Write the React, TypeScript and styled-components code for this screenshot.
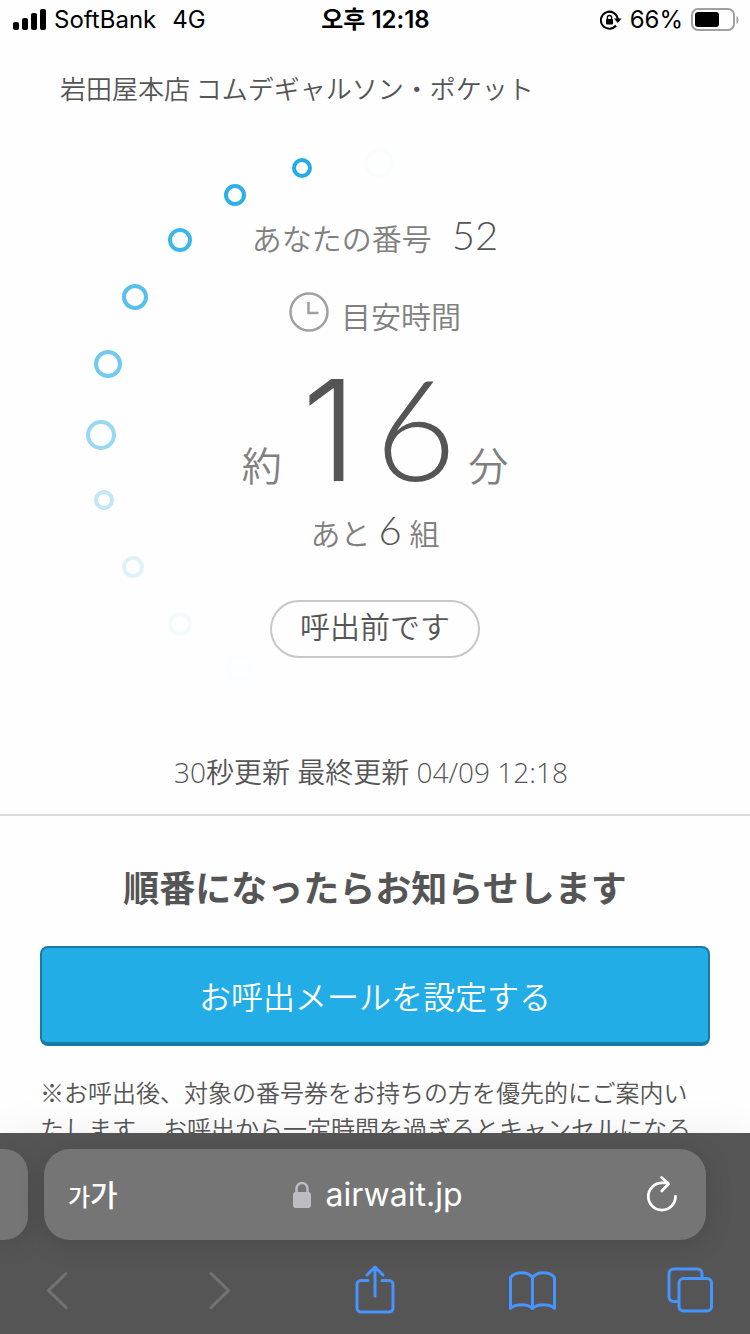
import React from "react";
import styled, { createGlobalStyle } from "styled-components";

const jp = `"Noto Sans CJK JP", sans-serif`;
const latin = `Inter, "Noto Sans CJK KR", sans-serif`;

const GlobalStyle = createGlobalStyle`
  *, *::before, *::after { box-sizing: border-box; }
  body { margin: 0; background: #fefefe; }
  h1, h2, p { margin: 0; }
  button { border: 0; padding: 0; background: none; color: inherit; font: inherit; cursor: pointer; }
`;

const Screen = styled.div`
  display: flex;
  flex-direction: column;
  height: 100vh;
  overflow: hidden;
  color: #555;
  font-family: ${jp};
  font-weight: 350;
`;

const StatusBar = styled.header`
  display: grid;
  grid-template-columns: 1fr auto 1fr;
  align-items: center;
  flex: none;
  height: 40px;
  padding: 0 11px 0 12px;
  color: #000;
  font: 400 24px/32px ${latin};
`;

const StatusGroup = styled.div<{ $end?: boolean }>`
  display: flex;
  align-items: center;
  justify-content: ${(p) => (p.$end ? "flex-end" : "flex-start")};
  gap: 8px;
`;

const Network = styled.span`
  margin-left: 8px;
`;

const Clock = styled.time`
  font-weight: 600;
`;

const Page = styled.main`
  flex: 1;
  min-height: 0;
  overflow: hidden;
`;

const ShopName = styled.h1`
  padding: 28px 60px 0;
  font-size: 26px;
  font-weight: inherit;
  line-height: 40px;
`;

const WaitStatus = styled.section`
  position: relative;
  display: flex;
  flex-direction: column;
  align-items: center;
  padding: 105px 0 22px;
  border-bottom: 2px solid #dcdcdc;
`;

const Dots = styled.svg`
  position: absolute;
  top: 0;
  left: calc(50% - 295px);
`;

const Row = styled.p<{ $gap: number; $top?: number }>`
  display: flex;
  align-items: baseline;
  gap: ${(p) => p.$gap}px;
  margin-top: ${(p) => p.$top ?? 0}px;
  color: #808080;
  font-size: 30px;
  line-height: 48px;
`;

const ClockIcon = styled.svg`
  align-self: flex-start;
`;

const Unit = styled.span`
  font-size: 40px;
`;

const Num = styled.span`
  color: #555;
  font-family: Lato, sans-serif;
  font-size: 40px;
  font-weight: 300;
  line-height: 40px;
`;

const Minutes = styled(Num)`
  padding-left: 8px;
  font-size: 140px;
  line-height: 120px;
`;

const Tens = styled.span`
  margin-right: 18px;
  font-family: Inter, sans-serif;
`;

const StatePill = styled.p`
  margin-top: 44px;
  padding: 0 28px 8px;
  border: 2px solid #c8c8c8;
  border-radius: 29px;
  font-size: 30px;
  line-height: 46px;
`;

const Updated = styled.p`
  margin-top: 94px;
  padding-right: 8px;
  font-family: "Open Sans", ${jp};
  font-size: 28px;
  line-height: 40px;
`;

const Notify = styled.section`
  padding: 44px 40px 0;
`;

const NotifyTitle = styled.h2`
  font-size: 36px;
  font-weight: 700;
  line-height: 52px;
  text-align: center;
`;

const MailButton = styled.button`
  display: block;
  width: 100%;
  height: 100px;
  margin: 34px 0 28px;
  border: 2px solid #197ba3;
  border-bottom-width: 4px;
  border-radius: 8px;
  background: #22ade6;
  color: #fff;
  font-size: 32px;
`;

const Note = styled.p`
  font-size: 24px;
  line-height: 36px;
`;

const Browser = styled.footer`
  position: relative;
  flex: none;
  background: #555;
  box-shadow: 0 0 40px rgba(0, 0, 0, 0.06);
`;

const Tabs = styled.div`
  display: flex;
  gap: 16px;
  padding: 16px 44px 0 0;
`;

const PreviousTab = styled.button`
  width: 28px;
  border-radius: 0 24px 24px 0;
  background: #757575;
  box-shadow: 0 4px 28px rgba(0, 0, 0, 0.14);
`;

const AddressBar = styled.div`
  display: grid;
  grid-template-columns: 1fr auto 1fr;
  align-items: center;
  flex: 1;
  height: 91px;
  padding: 0 24px;
  border-radius: 26px;
  background: #757575;
  box-shadow: 0 4px 28px rgba(0, 0, 0, 0.14);
  color: #fff;
  font: 400 32px/40px ${latin};
`;

const TextSize = styled.button`
  justify-self: start;
  padding-top: 4px;
  font-size: 30px;
  font-weight: 500;
`;

const SmallLetter = styled.span`
  font-size: 24px;
`;

const Address = styled.button`
  display: flex;
  align-items: center;
  gap: 14px;
  padding-left: 4px;
`;

const Reload = styled.button`
  display: flex;
  justify-self: end;
`;

const Toolbar = styled.nav`
  display: flex;
  justify-content: space-between;
  padding: 22px 36px 16px 34px;
`;

const Tool = styled.button`
  display: flex;
  width: 48px;
  height: 56px;
  color: #4793ff;

  &:disabled { color: #737373; }
`;

const dots = [
  { x: 379, y: 163, r: 13, o: 0.02 },
  { x: 302, y: 168, r: 8, o: 1 },
  { x: 235, y: 195, r: 9, o: 0.96 },
  { x: 180, y: 240, r: 10, o: 0.88 },
  { x: 135, y: 297, r: 11, o: 0.76 },
  { x: 108, y: 364, r: 12, o: 0.64 },
  { x: 101, y: 435, r: 13, o: 0.46 },
  { x: 104, y: 500, r: 8, o: 0.27 },
  { x: 133, y: 567, r: 9, o: 0.14 },
  { x: 180, y: 624, r: 10, o: 0.05 },
  { x: 239, y: 668, r: 11, o: 0.015 },
];

const stroke = {
  fill: "none",
  stroke: "currentColor",
  strokeLinecap: "round" as const,
  strokeLinejoin: "round" as const,
};

export default function App() {
  return (
    <Screen>
      <GlobalStyle />
      <StatusBar>
        <StatusGroup>
          <svg width="34" height="22" viewBox="0 0 34 22" aria-label="Signal">
            <rect x="1" y="13" width="6" height="8" rx="2" />
            <rect x="10" y="9" width="6" height="12" rx="2" />
            <rect x="19" y="4" width="6" height="17" rx="2" />
            <rect x="28" y="0" width="6" height="21" rx="2" />
          </svg>
          <span>SoftBank</span>
          <Network>4G</Network>
        </StatusGroup>
        <Clock>오후 12:18</Clock>
        <StatusGroup $end>
          <svg width="22" height="20" viewBox="0 0 22 20" aria-label="Rotation lock">
            <path d="M16 15.500A8.500 8.500 0 1 1 17.800 9" fill="none" stroke="#000" strokeWidth="2" />
            <path d="M14 8.400h7.600L17.800 13z" />
            <rect x="6" y="9" width="7" height="5.500" rx="1" />
            <path d="M7.400 9.400V7.600a2.100 2.100 0 0 1 4.200 0v1.800" fill="none" stroke="#000" strokeWidth="1.400" />
          </svg>
          <span>66%</span>
          <svg width="48" height="24" viewBox="0 0 48 24" aria-label="Battery">
            <rect x="1" y="1" width="42" height="21" rx="6" fill="none" stroke="#a0a0a0" strokeWidth="2" />
            <rect x="4" y="4" width="24" height="15" rx="3" />
            <path d="M45.500 8v8c2.600-1 2.600-7 0-8z" fill="#a0a0a0" />
          </svg>
        </StatusGroup>
      </StatusBar>

      <Page>
        <ShopName>岩田屋本店 コムデギャルソン・ポケット</ShopName>
        <WaitStatus>
          <Dots width="320" height="580" viewBox="80 108 320 580" aria-hidden="true">
            {dots.map((d) => (
              <circle key={d.y} cx={d.x} cy={d.y} r={d.r} fill="none" stroke="#22ade6" strokeWidth="4" opacity={d.o} />
            ))}
          </Dots>
          <Row $gap={20}>
            あなたの番号<Num>52</Num>
          </Row>
          <Row $gap={12} $top={30}>
            <ClockIcon width="40" height="42" viewBox="0 0 40 42" aria-hidden="true">
              <circle cx="20" cy="21" r="18.500" fill="none" stroke="#a0a0a0" strokeWidth="2.500" />
              <path d="M19.500 11v11H29.500" fill="none" stroke="#a0a0a0" strokeWidth="2.500" />
            </ClockIcon>
            目安時間
          </Row>
          <Row $gap={12} $top={28}>
            <Unit>約</Unit>
            <Minutes>
              <Tens>1</Tens>6
            </Minutes>
            <Unit>分</Unit>
          </Row>
          <Row $gap={8} $top={18}>
            あと<Num>6</Num>組
          </Row>
          <StatePill>呼出前です</StatePill>
          <Updated>30秒更新 最終更新 04/09 12:18</Updated>
        </WaitStatus>

        <Notify>
          <NotifyTitle>順番になったらお知らせします</NotifyTitle>
          <MailButton type="button">お呼出メールを設定する</MailButton>
          <Note>
            ※お呼出後、対象の番号券をお持ちの方を優先的にご案内いたします。 お呼出から一定時間を過ぎるとキャンセルになる
          </Note>
        </Notify>
      </Page>

      <Browser>
        <Tabs>
          <PreviousTab type="button" aria-label="Previous tab" />
          <AddressBar>
            <TextSize type="button">
              <SmallLetter>가</SmallLetter>가
            </TextSize>
            <Address type="button">
              <svg width="20" height="28" viewBox="0 0 20 28" fill="#bdbcc3" aria-hidden="true">
                <rect x="1" y="11" width="18" height="16" rx="3" />
                <path d="M4.500 13V7.500a5.500 5.500 0 0 1 11 0V13" fill="none" stroke="#bdbcc3" strokeWidth="2.500" />
              </svg>
              airwait.jp
            </Address>
            <Reload type="button" aria-label="Reload">
              <svg width="40" height="40" viewBox="0 0 40 40" {...stroke} strokeWidth="2.800">
                <path d="M33.500 21.500a13.600 13.600 0 1 1-13.600-13.600h6" />
                <path d="M19.600 2.500L26.500 9l-6.700 7" />
              </svg>
            </Reload>
          </AddressBar>
        </Tabs>
        <Toolbar>
          <Tool type="button" disabled aria-label="Back">
            <svg width="48" height="56" viewBox="0 0 48 56" {...stroke} strokeWidth="3">
              <path d="M32 11.500L14.500 28.500 32 45.500" />
            </svg>
          </Tool>
          <Tool type="button" disabled aria-label="Forward">
            <svg width="48" height="56" viewBox="0 0 48 56" {...stroke} strokeWidth="3">
              <path d="M19 11.500L36.500 28.500 19 45.500" />
            </svg>
          </Tool>
          <Tool type="button" aria-label="Share">
            <svg width="48" height="56" viewBox="0 0 48 56" {...stroke} strokeWidth="3">
              <path d="M18 18.500h-7a4 4 0 0 0-4 4V46a4 4 0 0 0 4 4h28a4 4 0 0 0 4-4V22.500a4 4 0 0 0-4-4h-7" />
              <path d="M25 34V5M17 13l8-8 8 8" />
            </svg>
          </Tool>
          <Tool type="button" aria-label="Bookmarks">
            <svg width="48" height="56" viewBox="0 0 48 56" {...stroke} strokeWidth="3">
              <path d="M24.500 46.500V15.500C20 9 7 9 2.500 15.500v31c5-5 17-5 22 0 5-5 17-5 22 0V15.500C42 9 29 9 24.500 15.500" />
            </svg>
          </Tool>
          <Tool type="button" aria-label="Tabs">
            <svg width="48" height="56" viewBox="0 0 48 56" {...stroke} strokeWidth="3">
              <path d="M12 39.500H7.500A4.500 4.500 0 0 1 3 35V11.500A4.500 4.500 0 0 1 7.500 7h24a4.500 4.500 0 0 1 4.500 4.500V16" />
              <rect x="13" y="16.500" width="32.500" height="32.500" rx="4.500" />
            </svg>
          </Tool>
        </Toolbar>
      </Browser>
    </Screen>
  );
}
